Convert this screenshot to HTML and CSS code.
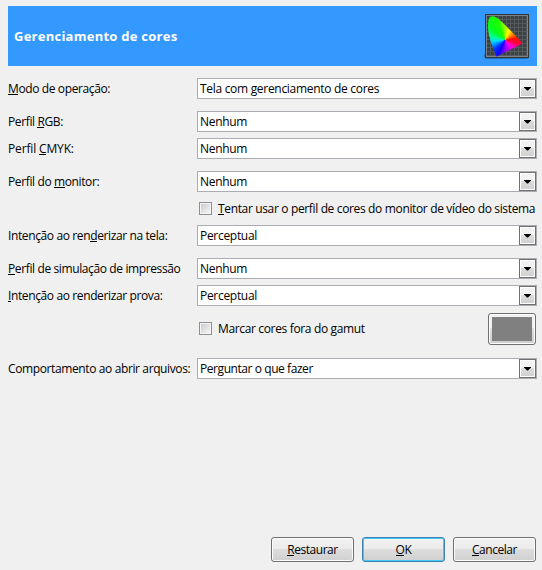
FILE: index.html
```html
<!DOCTYPE html>
<html lang="pt-BR">
<head>
<meta charset="utf-8">
<title>Gerenciamento de cores</title>
<link rel="stylesheet" href="styles.css">
</head>
<body>
<main class="dialog">
  <header class="banner">
    <h1>Gerenciamento de cores</h1>
    <svg class="gamut" width="46" height="48" viewBox="0 0 46 48">
      <defs>
        <pattern id="grid" x="3" y="3" width="4" height="4" patternUnits="userSpaceOnUse">
          <rect width="4" height="4" fill="#555b5d"/><rect width="3" height="3" fill="#3b4244"/>
        </pattern>
        <clipPath id="shape"><path d="M4 14C4 7 5 3 9 3.3C13 4 17 8 21 12C27 18 34 25 38.5 30.5L12.5 43.5C8 33 4 22 4 14Z"/></clipPath>
      </defs>
      <rect x="0" y="40" width="45" height="6" rx="3" fill="#174f87" opacity=".55"/>
      <rect x="1" y="1" width="44" height="44" fill="#2e3436"/>
      <rect x="2.5" y="2.5" width="41" height="41" fill="url(#grid)" stroke="#7d8385"/>
      <foreignObject x="0" y="0" width="46" height="48" clip-path="url(#shape)"><div class="spectrum"></div></foreignObject>
    </svg>
  </header>
  <form class="fields">
    <label><u>M</u>odo de operação:</label>
    <div class="select"><span>Tela com gerenciamento de cores</span><i></i></div>
    <label class="gap">Perfil <u>R</u>GB:</label>
    <div class="select gap"><span>Nenhum</span><i></i></div>
    <label class="cmyk">Perfil <u>C</u>MYK:</label>
    <div class="select"><span>Nenhum</span><i></i></div>
    <label class="gap">Perfil do <u>m</u>onitor:</label>
    <div class="select gap"><span>Nenhum</span><i></i></div>
    <div class="check"><b></b><span><u>T</u>entar usar o perfil de cores do monitor de vídeo do sistema</span></div>
    <label>Intenção ao ren<u>d</u>erizar na tela:</label>
    <div class="select"><span>Perceptual</span><i></i></div>
    <label class="gap"><u>P</u>erfil de simulação de impressão</label>
    <div class="select gap"><span>Nenhum</span><i></i></div>
    <label><u>I</u>ntenção ao renderizar prova:</label>
    <div class="select"><span>Perceptual</span><i></i></div>
    <div class="check tall"><b></b><span>Marcar cores fora do gamut</span><div class="swatch"></div></div>
    <label class="gap">Comportamento ao abrir arquivos:</label>
    <div class="select gap"><span class="tight">Perguntar o que fazer</span><i></i></div>
  </form>
  <footer class="actions">
    <button><u>R</u>estaurar</button>
    <button class="primary"><u>O</u>K</button>
    <button><u>C</u>ancelar</button>
  </footer>
</main>
</body>
</html>
```
FILE: styles.css
```css
* { box-sizing: border-box; }
body { margin: 0; background: #f0f0f0; color: #000; font: 12px/21px "Open Sans", "Noto Sans", sans-serif; letter-spacing: -.3px; }
.dialog { width: 542px; height: 570px; padding: 6px 5px 8px 8px; display: flex; flex-direction: column; }
.banner { height: 60px; background: #3399ff; display: flex; align-items: center; justify-content: space-between; padding: 0 7px 0 6px; }
.banner h1 { margin: 0; color: #fff; font-size: 13px; font-weight: 700; letter-spacing: .25px; }
.gamut { display: block; margin-top: 1px; }
.spectrum { width: 46px; height: 48px; background: conic-gradient(from 0deg at 21px 27px, #a0ff00 0deg, #ffff00 22deg, #ff9800 50deg, #ff1000 82deg, #ff0040 105deg, #ff00e0 135deg, #9a00ff 175deg, #1000ff 205deg, #0040ff 230deg, #00d8ff 262deg, #00ff90 285deg, #00ff20 310deg, #20ff00 340deg, #a0ff00 360deg); }
.fields { display: grid; grid-template-columns: 189px 340px; row-gap: 6px; padding-top: 12px; }
label { height: 21px; white-space: nowrap; letter-spacing: -.38px; }
.cmyk { letter-spacing: -.15px; }
.tight { letter-spacing: -.43px; }
.gap { margin-top: 6px; }
u { text-decoration: none; border-bottom: 1px solid #000; display: inline-block; line-height: 13px; height: 13px; }
.select { height: 21px; display: flex; justify-content: space-between; border: 1px solid #abadb3; background: #fff; padding-left: 2px; line-height: 19px; }
.select i { width: 17px; height: 19px; border: 1px solid #707070; background: linear-gradient(#f2f2f2 0 45%, #dddddd 50%, #cfcfcf); box-shadow: inset 0 0 0 1px #fff; display: flex; align-items: center; justify-content: center; }
.select i::before { content: ""; width: 7px; height: 4px; background: #000; clip-path: polygon(0 0, 7px 0, 7px 1px, 4px 4px, 3px 4px, 0 1px); }
.check { grid-column: 2; height: 21px; display: flex; align-items: center; gap: 6px; padding-left: 2px; white-space: nowrap; letter-spacing: -.35px; }
.check b { width: 13px; height: 13px; flex: none; border: 1px solid #8e8f8f; background: linear-gradient(135deg, #c9ccd1, #f5f5f5) content-box, #f4f4f4; padding: 1px; }
.check.tall { height: 34px; }
.check.tall b, .check.tall span { margin-bottom: 1px; }
.swatch { width: 48px; height: 32px; margin: 0 1px 0 auto; border: 1px solid #707070; border-radius: 3px; background: linear-gradient(#808080, #808080) 3px 3px / 40px 24px no-repeat, linear-gradient(#f2f2f2 45%, #dddddd 50%, #cfcfcf); box-shadow: inset 0 0 0 1px #fcfcfc; }
.actions { display: flex; justify-content: flex-end; gap: 8px; margin-top: auto; padding-right: 1px; }
button { width: 83px; height: 25px; padding: 0; border: 1px solid #707070; border-radius: 3px; background: linear-gradient(#f2f2f2, #ebebeb 48%, #dddddd 50%, #cfcfcf); box-shadow: inset 0 0 0 1px #fcfcfc; font: inherit; letter-spacing: -.45px; color: inherit; }
.primary { border-color: #3c7fb1; box-shadow: inset 0 0 0 1px #48c8f4; }
```
